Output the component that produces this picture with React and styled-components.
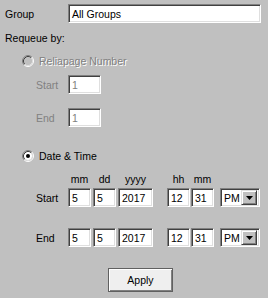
import React from 'react';
import styled, { createGlobalStyle } from 'styled-components';

const Global = createGlobalStyle`
  html, body { margin: 0; padding: 0; background: #c0c0c0; }
  body { font-family: "Liberation Sans", Arial, sans-serif; font-size: 10.5px; color: #000; }
  * { box-sizing: border-box; }
`;

const Page = styled.div`
  width: 268px;
  height: 298px;
  background: #c0c0c0;
  padding: 4px 7px 0 5px;
  display: flex;
  flex-direction: column;
`;

const GroupRow = styled.div`
  display: grid;
  grid-template-columns: 63px 1fr;
  align-items: center;
`;

const Label = styled.span`
  line-height: 14px;
  white-space: nowrap;
  color: ${p => (p.$disabled ? '#808080' : '#000')};
  padding-left: ${p => p.$indent || 0}px;
`;

const Heading = styled.div`
  margin-top: ${p => p.$mt}px;
  line-height: 14px;
`;

const TextBox = styled.div`
  height: 19px;
  width: ${p => (p.$w ? `${p.$w}px` : 'auto')};
  background: #fff;
  border: 1px solid;
  border-color: #808080 #fff #fff #808080;
  box-shadow: inset 1px 1px #404040, inset -1px -1px #dfdfdf;
  padding: 0 0 0 3px;
  display: flex;
  align-items: center;
  color: ${p => (p.$disabled ? '#808080' : '#000')};
  white-space: nowrap;
  overflow: hidden;
`;

const RadioRow = styled.div`
  margin-top: ${p => p.$mt}px;
  padding-left: 17px;
  display: flex;
  align-items: center;
  gap: 5px;
  height: 14px;
`;

const RadioText = styled.span`
  line-height: 14px;
  color: ${p => (p.$disabled ? '#808080' : '#000')};
  text-shadow: ${p => (p.$disabled ? '1px 1px 0 #fff' : 'none')};
`;

const FieldRow = styled.div`
  margin-top: ${p => p.$mt}px;
  display: grid;
  grid-template-columns: 63px 33px;
  align-items: center;
`;

const DateRow = styled.div`
  margin-top: ${p => p.$mt}px;
  display: grid;
  grid-template-columns: 63px 25px 25px 49px 24px 29px 40px;
  align-items: center;
`;

const Caption = styled.span`
  width: ${p => p.$w}px;
  text-align: center;
  line-height: 14px;
`;

const Select = styled.div`
  height: 19px;
  width: 40px;
  background: #fff;
  border: 1px solid;
  border-color: #808080 #fff #fff #808080;
  box-shadow: inset 1px 1px #404040, inset -1px -1px #dfdfdf;
  display: flex;
  align-items: center;
  padding: 2px 2px 2px 3px;
`;

const SelectText = styled.span`
  flex: 1;
  line-height: 14px;
`;

const DropButton = styled.div`
  width: 16px;
  height: 15px;
  background: #c0c0c0;
  border: 1px solid;
  border-color: #dfdfdf #404040 #404040 #dfdfdf;
  box-shadow: inset 1px 1px #fff, inset -1px -1px #808080;
  display: flex;
  align-items: center;
  justify-content: center;
`;

const ButtonRow = styled.div`
  margin-top: 21px;
  padding-left: 103px;
  display: flex;
`;

const Button = styled.button`
  width: 65px;
  height: 24px;
  font: inherit;
  color: #000;
  background: #efefef;
  border: 1px solid #606060;
  box-shadow: inset 1px 1px #fff, inset -1px -1px #808080;
  padding: 0;
  display: flex;
  align-items: center;
  justify-content: center;
`;

const Radio = ({ checked, disabled }) => (
  <svg width="12" height="12" viewBox="0 0 12 12">
    <path d="M2.11 9.89 A5.5 5.5 0 0 1 9.89 2.11" stroke="#808080" fill="none" />
    <path d="M9.89 2.11 A5.5 5.5 0 0 1 2.11 9.89" stroke="#fff" fill="none" />
    <circle cx="6" cy="6" r="4" fill={disabled ? '#c0c0c0' : '#fff'} />
    <path d="M2.82 9.18 A4.5 4.5 0 0 1 9.18 2.82" stroke="#404040" fill="none" />
    <path d="M9.18 2.82 A4.5 4.5 0 0 1 2.82 9.18" stroke="#dfdfdf" fill="none" />
    {checked && <circle cx="6" cy="6" r="2" fill="#000" />}
  </svg>
);

const Arrow = () => (
  <svg width="7" height="4" viewBox="0 0 7 4">
    <path d="M0 0 H7 L3.5 4 Z" fill="#000" />
  </svg>
);

const DateFields = ({ label, mt }) => (
  <DateRow $mt={mt}>
    <Label $indent={31}>{label}</Label>
    <TextBox $w={23}>5</TextBox>
    <TextBox $w={23}>5</TextBox>
    <TextBox $w={35}>2017</TextBox>
    <TextBox $w={23}>12</TextBox>
    <TextBox $w={23}>31</TextBox>
    <Select>
      <SelectText>PM</SelectText>
      <DropButton><Arrow /></DropButton>
    </Select>
  </DateRow>
);

export default function App() {
  return (
    <>
      <Global />
      <Page>
        <GroupRow>
          <Label>Group</Label>
          <TextBox>All Groups</TextBox>
        </GroupRow>
        <Heading $mt={8}>Requeue by:</Heading>

        <RadioRow $mt={9}>
          <Radio disabled />
          <RadioText $disabled>Reliapage Number</RadioText>
        </RadioRow>
        <FieldRow $mt={7}>
          <Label $disabled $indent={31}>Start</Label>
          <TextBox $disabled>1</TextBox>
        </FieldRow>
        <FieldRow $mt={14}>
          <Label $disabled $indent={31}>End</Label>
          <TextBox $disabled>1</TextBox>
        </FieldRow>

        <RadioRow $mt={22}>
          <Radio checked />
          <RadioText>Date &amp; Time</RadioText>
        </RadioRow>
        <DateRow $mt={9}>
          <span />
          <Caption $w={23}>mm</Caption>
          <Caption $w={23}>dd</Caption>
          <Caption $w={35}>yyyy</Caption>
          <Caption $w={23}>hh</Caption>
          <Caption $w={23}>mm</Caption>
          <span />
        </DateRow>
        <DateFields label="Start" mt={2} />
        <DateFields label="End" mt={21} />

        <ButtonRow>
          <Button>Apply</Button>
        </ButtonRow>
      </Page>
    </>
  );
}
